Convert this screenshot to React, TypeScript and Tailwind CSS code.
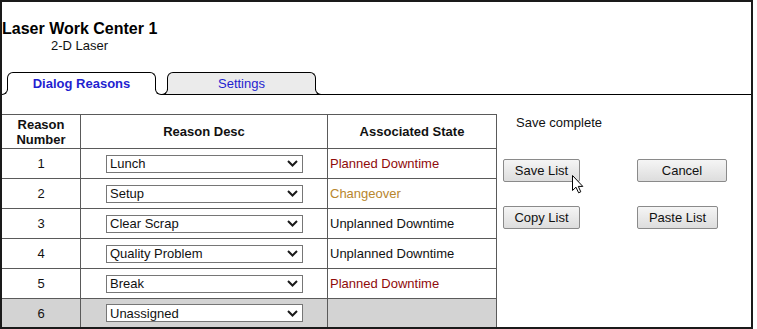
import React from "react";

type Row = { n: number; desc: string; state: string; color: string; gray?: boolean };

const rows: Row[] = [
  { n: 1, desc: "Lunch", state: "Planned Downtime", color: "text-[#8f0b0b]" },
  { n: 2, desc: "Setup", state: "Changeover", color: "text-[#b8862e]" },
  { n: 3, desc: "Clear Scrap", state: "Unplanned Downtime", color: "text-[#111]" },
  { n: 4, desc: "Quality Problem", state: "Unplanned Downtime", color: "text-[#111]" },
  { n: 5, desc: "Break", state: "Planned Downtime", color: "text-[#8f0b0b]" },
  { n: 6, desc: "Unassigned", state: "", color: "text-[#111]", gray: true },
];

function FakeSelect({ value }: { value: string }) {
  return (
    <div className="ml-[25px] w-[197px] h-[18px] border border-[#767676] bg-white flex items-center justify-between pl-[3px] pr-[4px] text-[13px] leading-[15px] text-[#111]">
      <span>{value}</span>
      <svg width="11" height="7" viewBox="0 0 11 7">
        <path d="M1 1 L5.5 5.5 L10 1" fill="none" stroke="#1a1a1a" strokeWidth="2" />
      </svg>
    </div>
  );
}

function Btn({ w, children }: { w: string; children: React.ReactNode }) {
  return (
    <div
      className={`${w} h-[23px] border border-[#8a8a8a] rounded-[2px] bg-linear-to-b from-[#f5f5f5] to-[#dddddd] flex items-center justify-center text-[13px] leading-[15px] text-[#111]`}
    >
      {children}
    </div>
  );
}

export default function App() {
  return (
    <div className="relative w-[757px] h-[329px] bg-white font-['Liberation_Sans',Arial,sans-serif]">
      <div className="w-[753px] h-[329px] border-2 border-[#1a1a1a] flex flex-col">
        {/* Title */}
        <div className="pt-[18px]">
          <div className="text-[16px] leading-[18px] font-bold text-black">Laser Work Center 1</div>
          <div className="pl-[49px] text-[13px] leading-[15px] text-[#111]">2-D Laser</div>
        </div>

        {/* Tabs */}
        <div className="mt-[19px] h-[23px] flex items-end border-b border-black pl-[5px]">
          <div className="relative w-[149px] h-[23px] -mb-px flex items-center justify-center">
            <div className="absolute inset-0 rounded-t-[6px] border-t border-x border-black bg-white" />
            <div className="absolute left-[-5px] right-[-5px] bottom-0 h-px bg-white" />
            <div className="absolute left-0 bottom-0 w-px h-[5px] bg-white" />
            <div className="absolute right-0 bottom-0 w-px h-[5px] bg-white" />
            <div className="absolute left-[-5px] bottom-0 w-[6px] h-[6px] border-r border-b border-black rounded-br-[6px]" />
            <div className="absolute right-[-5px] bottom-0 w-[6px] h-[6px] border-l border-b border-black rounded-bl-[6px]" />
            <span className="relative font-bold text-[13px] leading-[15px] text-[#1f1fd0]">Dialog Reasons</span>
          </div>
          <div className="relative ml-[11px] w-[149px] h-[22px] flex items-center justify-center">
            <div className="absolute inset-0 rounded-t-[6px] border-t border-x border-black bg-[#ebebeb]" />
            <div className="absolute left-0 bottom-0 w-px h-[4px] bg-[#ebebeb]" />
            <div className="absolute right-0 bottom-0 w-px h-[4px] bg-[#ebebeb]" />
            <div className="absolute left-[-5px] -bottom-px w-[6px] h-[6px] border-r border-b border-black rounded-br-[6px]" />
            <div className="absolute right-[-5px] -bottom-px w-[6px] h-[6px] border-l border-b border-black rounded-bl-[6px]" />
            <span className="relative text-[13px] leading-[15px] text-[#1f1fd0]">Settings</span>
          </div>
        </div>

        {/* Body */}
        <div className="mt-[19px] flex flex-1">
          <div className="w-[495px] border-t border-r border-[#5a5a5a] flex flex-col">
            <div className="h-[34px] flex border-b border-[#5a5a5a] font-bold text-[13px] leading-[15px] text-[#111]">
              <div className="w-[79px] border-r border-[#5a5a5a] flex items-center justify-center text-center">
                Reason
                <br />
                Number
              </div>
              <div className="w-[247px] border-r border-[#5a5a5a] flex items-center justify-center">Reason Desc</div>
              <div className="flex-1 flex items-center justify-center">Associated State</div>
            </div>
            {rows.map((r, i) => (
              <div
                key={r.n}
                className={`${i === rows.length - 1 ? "h-[28px]" : "h-[30px] border-b border-[#5a5a5a]"} ${
                  r.gray ? "bg-[#d3d3d3]" : "bg-white"
                } flex text-[13px] leading-[15px]`}
              >
                <div className="w-[79px] border-r border-[#5a5a5a] flex items-center justify-center text-[#111]">{r.n}</div>
                <div className="w-[247px] border-r border-[#5a5a5a] flex items-center">
                  <FakeSelect value={r.desc} />
                </div>
                <div className={`flex-1 flex items-center pl-[2px] ${r.color}`}>{r.state}</div>
              </div>
            ))}
          </div>

          <div className="flex-1 pt-[1px]">
            <div className="pl-[19px] text-[13px] leading-[15px] text-[#111]">Save complete</div>
            <div className="mt-[29px] ml-[6px] grid grid-cols-[134px_auto] gap-y-[24px] justify-start">
              <Btn w="w-[77px]">Save List</Btn>
              <Btn w="w-[90px]">Cancel</Btn>
              <Btn w="w-[77px]">Copy List</Btn>
              <Btn w="w-[81px]">Paste List</Btn>
            </div>
          </div>
        </div>
      </div>

      {/* Mouse cursor */}
      <svg className="absolute left-[572px] top-[175px]" width="12" height="19" viewBox="0 0 12 19">
        <path
          d="M0.5 0.5 L0.5 15.5 L4 12.2 L6.6 17.8 L8.8 16.8 L6.3 11.4 L10.8 11.4 Z"
          fill="white"
          stroke="black"
          strokeWidth="1"
          strokeLinejoin="miter"
        />
      </svg>
    </div>
  );
}
